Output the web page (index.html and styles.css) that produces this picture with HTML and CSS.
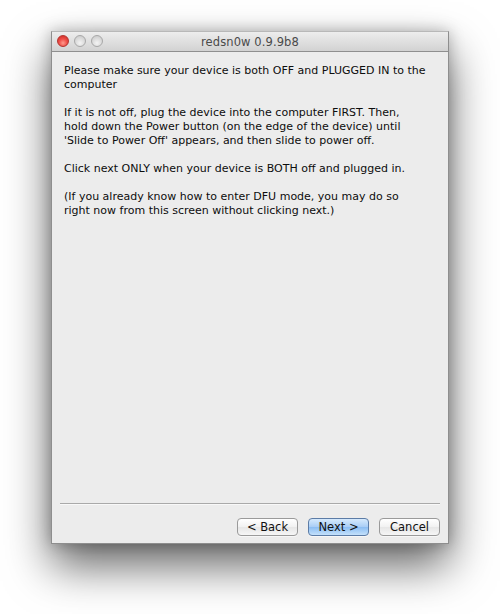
FILE: index.html
```html
<!DOCTYPE html>
<html>
<head>
<meta charset="utf-8">
<link rel="stylesheet" href="styles.css">
</head>
<body>
<div class="stage">
  <div class="window">
    <div class="titlebar">
      <div class="lights">
        <span class="light close"></span>
        <span class="light"></span>
        <span class="light"></span>
      </div>
      <div class="title">redsn0w 0.9.9b8</div>
    </div>
    <div class="content">
      <div class="text">
        <p>Please make sure your device is both OFF and PLUGGED IN to the<br>computer</p>
        <p>If it is not off, plug the device into the computer FIRST. Then,<br>hold down the Power button (on the edge of the device) until<br>'Slide to Power Off' appears, and then slide to power off.</p>
        <p>Click next ONLY when your device is BOTH off and plugged in.</p>
        <p>(If you already know how to enter DFU mode, you may do so<br>right now from this screen without clicking next.)</p>
      </div>
      <div class="separator"></div>
      <div class="buttons">
        <button class="btn">&lt; Back</button>
        <button class="btn primary">Next &gt;</button>
        <button class="btn">Cancel</button>
      </div>
    </div>
  </div>
</div>
</body>
</html>
```
FILE: styles.css
```css
html, body {
  margin: 0;
  padding: 0;
  background: #ffffff;
}
body {
  width: 500px;
  height: 614px;
  overflow: hidden;
  font-family: "DejaVu Sans", "Liberation Sans", sans-serif;
}
.stage {
  padding: 31px 0 0 51px;
}
.window {
  width: 396px;
  height: 511px;
  border: 1px solid #8e8e8e;
  border-top-color: #b8b8b8;
  background: #ececec;
  display: flex;
  flex-direction: column;
  box-shadow: 0 22px 42px rgba(0,0,0,0.6), 0 0 14px rgba(0,0,0,0.25);
}
.titlebar {
  height: 19px;
  flex: none;
  position: relative;
  display: flex;
  align-items: center;
  justify-content: center;
  background: linear-gradient(#ededed, #d2d2d2);
  border-bottom: 1px solid #8f8f8f;
}
.lights {
  position: absolute;
  left: 5px;
  top: 3px;
  display: flex;
  gap: 5px;
}
.light {
  width: 12px;
  height: 12px;
  border-radius: 50%;
  box-sizing: border-box;
  border: 1px solid #a8a8a8;
  background: radial-gradient(circle at 50% 70%, #f4f4f4 0%, #dadada 55%, #c6c6c6 100%);
}
.light.close {
  border-color: #b3342f;
  background: radial-gradient(circle at 50% 70%, #ff9c8e 0%, #f0504a 45%, #c8261f 100%);
}
.title {
  font-size: 11.5px;
  color: #4a4a4a;
  letter-spacing: 0.1px;
}
.content {
  flex: 1;
  display: flex;
  flex-direction: column;
  padding: 0 8px 7px 8px;
}
.text {
  flex: 1;
  padding: 12px 0 0 4px;
  font-size: 11px;
  line-height: 14px;
  color: #0d0d0d;
}
.text p {
  margin: 0 0 14px 0;
}
.separator {
  height: 1px;
  background: #a9a9a9;
  border-bottom: 1px solid #f8f8f8;
  margin: 0 0 13px 0;
}
.buttons {
  display: flex;
  justify-content: flex-end;
  gap: 10px;
}
.btn {
  width: 61px;
  height: 18px;
  padding: 0;
  font-family: "DejaVu Sans", "Liberation Sans", sans-serif;
  font-size: 11.5px;
  color: #111;
  border: 1px solid #9a9a9a;
  border-radius: 4px;
  background: linear-gradient(#ffffff, #f1f1f1 50%, #e6e6e6 51%, #f6f6f6);
  box-shadow: 0 1px 0 rgba(255,255,255,0.6);
}
.btn.primary {
  border-color: #5c7ca6;
  background: linear-gradient(#d6eafd, #a8cdf6 50%, #8bbdf3 51%, #c4e1fb);
}
```
